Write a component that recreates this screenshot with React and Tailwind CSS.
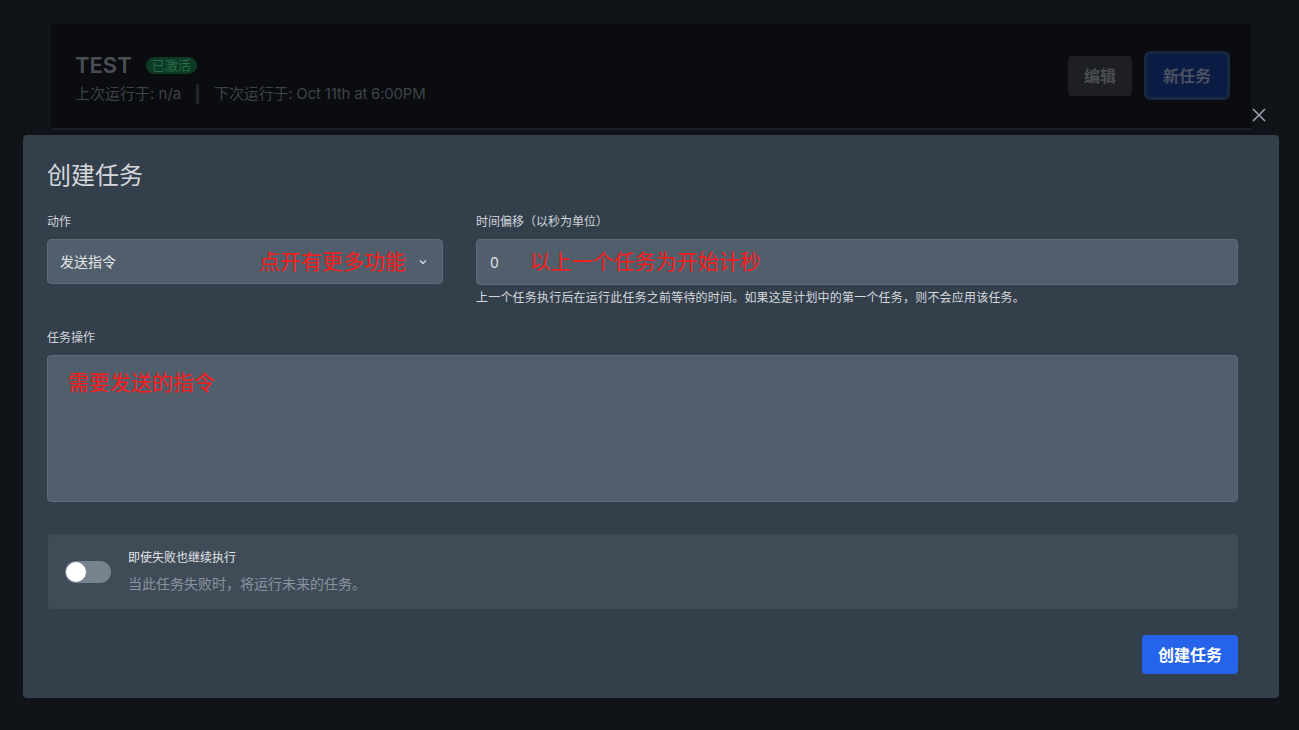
import React from "react";

const font = { fontFamily: '"Inter", "Noto Sans CJK SC", sans-serif' };

export default function App() {
  return (
    <div className="relative w-[1299px] h-[730px] bg-[#101317] overflow-hidden" style={font}>
      {/* background page */}
      <div className="pt-[24px] pl-[51px]">
        <div className="w-[1200px] h-[106px] bg-[#0a0c0f] border-b-2 border-[#1a1d21] flex items-start justify-between pl-[24px] pr-[21px] pt-[27px]">
          <div className="flex flex-col">
            <div className="flex items-center gap-[14px]">
              <span className="text-[22px] leading-[28px] font-semibold text-[#4a4f55]">TEST</span>
              <span className="text-[13px] leading-[17px] px-[6px] rounded-full bg-[#0c3a25] text-[#2b6b4b]">已激活</span>
            </div>
            <div className="flex items-center mt-[5px] text-[15px] leading-[20px] text-[#3d4349]">
              <span>上次运行于: n/a</span>
              <span className="mx-[15px] w-[3px] h-[20px] bg-[#22252a]"></span>
              <span className="tracking-[-0.2px]">下次运行于: Oct 11th at 6:00PM</span>
            </div>
          </div>
          <div className="flex items-center gap-[12px]">
            <button className="h-[40px] px-[16px] rounded-[4px] bg-[#1d1f23] text-[#4a4d52] text-[16px] font-bold">编辑</button>
            <button className="h-[49px] px-[16px] rounded-[6px] bg-[#0a1c44] border-[3px] border-[#172840] text-[#4b5261] text-[16px] font-bold">新任务</button>
          </div>
        </div>
      </div>

      {/* close */}
      <button className="absolute left-[1251px] top-[107px] w-[16px] h-[16px] text-[#9aa1aa]">
        <svg viewBox="0 0 16 16" width="16" height="16" fill="none" stroke="currentColor" strokeWidth="1.6">
          <path d="M2 2 L14 14 M14 2 L2 14" />
        </svg>
      </button>

      {/* modal */}
      <div className="absolute left-[23px] top-[135px] w-[1256px] h-[563px] bg-[#343f4c] rounded-[4px] pl-[24px] pr-[41px] pt-[25px]">
        <h2 className="text-[24px] leading-[32px] text-[#d4d8dd]">创建任务</h2>

        <div className="flex gap-[33px] mt-[22px]">
          <div className="w-[396px]">
            <label className="block text-[12px] leading-[16px] text-[#d1d5db] mb-[9px]">动作</label>
            <div className="relative h-[45px] bg-[#515e6b] border border-[#5e6a77] rounded-[4px] flex items-center pl-[12px] pr-[14px]">
              <span className="text-[14px] text-[#e2e5e9]">发送指令</span>
              <span className="ml-auto text-[21px] leading-[28px] text-[#ff1a1a]">点开有更多功能</span>
              <svg className="ml-[12px] text-[#d1d5db]" width="10" height="10" viewBox="0 0 10 10" fill="none" stroke="currentColor" strokeWidth="1.5">
                <path d="M2 3.5 L5 6.5 L8 3.5" />
              </svg>
            </div>
          </div>
          <div className="flex-1">
            <label className="block text-[12px] leading-[16px] text-[#d1d5db] mb-[9px]">时间偏移（以秒为单位）</label>
            <div className="h-[46px] bg-[#515e6b] border border-[#5e6a77] rounded-[4px] flex items-center pl-[13px]">
              <span className="text-[14px] text-[#e2e5e9]">0</span>
              <span className="ml-[31px] text-[21px] leading-[28px] text-[#ff1a1a]">以上一个任务为开始计秒</span>
            </div>
            <p className="mt-[5px] text-[12px] leading-[16px] text-[#d5d9de] tracking-[0.2px]">上一个任务执行后在运行此任务之前等待的时间。如果这是计划中的第一个任务，则不会应用该任务。</p>
          </div>
        </div>

        <div className="mt-[24px]">
          <label className="block text-[12px] leading-[16px] text-[#d1d5db] mb-[9px]">任务操作</label>
          <div className="h-[147px] bg-[#515e6b] border border-[#5e6a77] rounded-[4px] pl-[20px] pt-[13px]">
            <span className="text-[21px] leading-[28px] text-[#ff1a1a]">需要发送的指令</span>
          </div>
        </div>

        <div className="mt-[32px] ml-[1px] h-[75px] bg-[#404b58] rounded-[4px] flex items-center pl-[17px]">
          <div className="relative w-[46px] h-[22px] rounded-full bg-[#77838f]">
            <div className="absolute left-[1px] top-[1px] w-[20px] h-[20px] rounded-full bg-white"></div>
          </div>
          <div className="ml-[17px] flex flex-col">
            <span className="text-[12px] leading-[16px] text-[#e0e3e7]">即使失败也继续执行</span>
            <span className="mt-[8px] text-[14px] leading-[20px] text-[#8893a0]">当此任务失败时，将运行未来的任务。</span>
          </div>
        </div>

        <div className="flex justify-end mt-[26px]">
          <button className="h-[39px] px-[16px] rounded-[4px] bg-[#2563eb] text-white text-[16px] font-semibold">创建任务</button>
        </div>
      </div>
    </div>
  );
}
